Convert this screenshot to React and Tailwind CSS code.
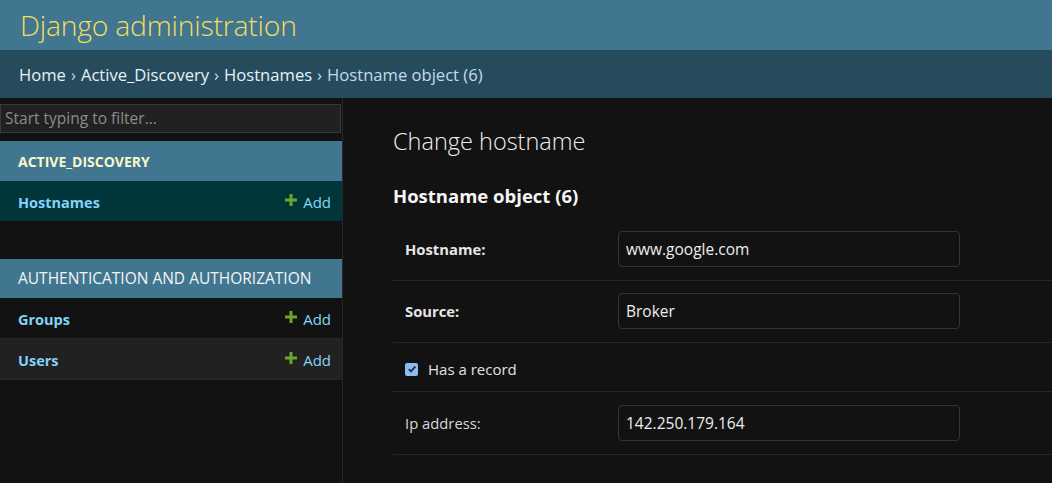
import React from "react";

const font = { fontFamily: '"Open Sans", "Noto Sans", sans-serif' };

function AddLink() {
  return (
    <span className="flex items-center gap-[6px] text-[15px] text-[#81d4fa]">
      <svg width="12" height="12" viewBox="0 0 12 12" className="-mt-[6px]">
        <rect x="4.5" y="0" width="3" height="12" fill="#6aa62c" />
        <rect x="0" y="4.5" width="12" height="3" fill="#6aa62c" />
      </svg>
      Add
    </span>
  );
}

function Row({ name, bg }) {
  return (
    <div
      className={`flex h-[41px] items-center justify-between border-b border-[#272727] pl-[18px] pr-[11px] pt-[3px] ${bg}`}
    >
      <span className="text-[14.5px] font-bold text-[#81d4fa]">{name}</span>
      <AddLink />
    </div>
  );
}

function Field({ label, value, bold, extra }) {
  return (
    <div className={`flex items-center border-b border-[#272727] pl-3 ${extra ? "pt-[13px] pb-[13px]" : "pt-3 pb-[13px]"}`}>
      <div className={`w-[213px] text-[14.8px] ${bold ? "font-bold text-[#e6e6e6]" : "text-[#d8d8d8]"}`}>{label}</div>
      <div className="flex h-[36px] w-[342px] items-center rounded-[4px] border border-[#353535] bg-[#121212] px-[7px] pt-[1px] text-[15.5px] text-[#eeeeee]">
        {value}
      </div>
    </div>
  );
}

export default function App() {
  return (
    <div className="flex min-h-screen flex-col bg-[#121212]" style={font}>
      <header className="flex h-[50px] items-center bg-[#417690] px-5">
        <h1 className="text-[28.3px] font-light leading-none tracking-[-0.2px] text-[#f5dd5d]">Django administration</h1>
      </header>
      <nav className="flex h-[48px] items-center bg-[#264b5d] px-[19px] pt-[3px] text-[16.6px] text-[#c4dce8]">
        <span className="text-[#e8f1f6]">Home</span>
        <span className="mx-[5px]">›</span>
        <span className="text-[#e8f1f6]">Active_Discovery</span>
        <span className="mx-[5px]">›</span>
        <span className="text-[#e8f1f6]">Hostnames</span>
        <span className="mx-[5px]">›</span>
        <span>Hostname object (6)</span>
      </nav>
      <div className="flex flex-1">
        <aside className="w-[343px] shrink-0 border-r border-[#272727] pt-[6px]">
          <div className="mr-[1px] flex h-[29px] items-center border border-[#3a3a3a] bg-[#212121] px-[4px] pt-[1px] text-[15.5px] text-[#8c8c8c]">
            Start typing to filter...
          </div>
          <div className="mt-[8px]">
            <div className="flex h-[40px] items-center bg-[#417690] pl-[18px] text-[14px] font-bold text-[#fbf6cc]">
              ACTIVE_DISCOVERY
            </div>
            <div className="flex h-[40px] items-center justify-between bg-[#00363a] pl-[18px] pr-[11px] pt-[3px]">
              <span className="text-[14.5px] font-bold text-[#81d4fa]">Hostnames</span>
              <AddLink />
            </div>
          </div>
          <div className="mt-[38px]">
            <div className="flex h-[39px] items-center bg-[#417690] pl-[18px] text-[15.5px] text-[#f4f4f4]">
              AUTHENTICATION AND AUTHORIZATION
            </div>
            <Row name="Groups" bg="bg-[#121212]" />
            <Row name="Users" bg="bg-[#212121]" />
          </div>
        </aside>
        <main className="flex-1 pl-[50px] pt-[28px]">
          <h1 className="text-[23.5px] font-light leading-[30px] text-[#eeeeee]">Change hostname</h1>
          <h2 className="mt-[28px] text-[18.5px] font-bold leading-[24px] text-[#f5f5f5]">Hostname object (6)</h2>
          <div className="mt-[11px]">
            <Field label="Hostname:" value="www.google.com" bold />
            <Field label="Source:" value="Broker" bold />
            <div className="flex h-[49px] items-center border-b border-[#272727] pl-3 pt-[4px]">
              <span className="flex h-[13px] w-[13px] items-center justify-center rounded-[2px] bg-[#8fbcf0]">
                <svg width="10" height="10" viewBox="0 0 10 10">
                  <path d="M1.8 5.2 L4 7.4 L8.4 2.4" fill="none" stroke="#2a2f36" strokeWidth="1.8" />
                </svg>
              </span>
              <span className="ml-[10px] text-[15px] text-[#e0e0e0]">Has a record</span>
            </div>
            <Field label="Ip address:" value="142.250.179.164" extra />
          </div>
        </main>
      </div>
    </div>
  );
}
